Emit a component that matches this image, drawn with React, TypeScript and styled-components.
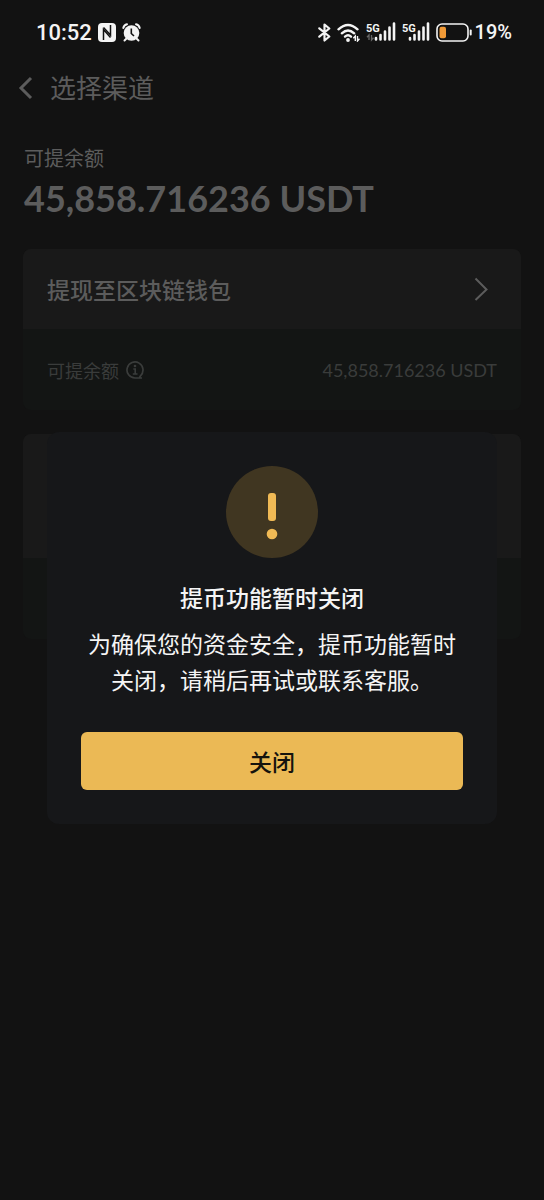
import React from "react";
import styled, { createGlobalStyle } from "styled-components";

const GlobalStyle = createGlobalStyle`
  * { box-sizing: border-box; }
  html, body, #root { min-height: 100vh; }
  body {
    margin: 0;
    background: #121212;
    font-family: Lato, "Noto Sans CJK SC", sans-serif;
  }
  button { font-family: inherit; border: 0; padding: 0; background: none; cursor: pointer; }
  h1, h2, p { margin: 0; }
  svg { display: block; flex: none; }
`;

const Page = styled.div`
  position: relative;
  min-height: 100vh;
  display: flex;
  flex-direction: column;
`;

const StatusBar = styled.div`
  display: flex;
  align-items: center;
  justify-content: space-between;
  height: 64px;
  padding: 0 32px 0 36px;
  color: #f4f4f4;
  font-family: Roboto, sans-serif;
  font-weight: 500;
`;

const StatusGroup = styled.div`
  display: flex;
  align-items: center;
  gap: 6px;
`;

const Clock = styled.span`
  font-size: 22px;
`;

const BatteryLevel = styled.span`
  margin-left: -3px;
  font-size: 20px;
`;

const Header = styled.header`
  display: flex;
  align-items: center;
  gap: 16px;
  height: 48px;
  padding: 0 18px;
  color: #5c5c5c;
`;

const BackButton = styled.button`
  color: inherit;
`;

const PageTitle = styled.h1`
  font-size: 26px;
  line-height: 36px;
  font-weight: 400;
`;

const Balance = styled.section`
  padding: 32px 24px 25px;
  color: #5c5c5c;
`;

const BalanceLabel = styled.p`
  font-size: 20px;
  line-height: 28px;
`;

const BalanceAmount = styled.p`
  font-size: 36px;
  line-height: 52px;
  font-weight: 700;
`;

const CardList = styled.main`
  display: flex;
  flex-direction: column;
  gap: 24px;
  padding: 0 23px;
`;

const Card = styled.section`
  border-radius: 8px;
  overflow: hidden;
  background: #131514;
`;

const CardHead = styled.button<{ $tall?: boolean }>`
  display: flex;
  align-items: center;
  justify-content: space-between;
  width: 100%;
  height: ${(p) => (p.$tall ? 124 : 80)}px;
  padding: 0 32px 0 24px;
  background: #191919;
  color: #5c5c5c;
  font-size: 23px;
  font-weight: 500;
`;

const CardRow = styled.div`
  display: flex;
  align-items: center;
  justify-content: space-between;
  height: 81px;
  padding: 0 24px;
  color: #3a3c3b;
  font-size: 18px;
`;

const InfoLabel = styled.span`
  display: flex;
  align-items: center;
  gap: 7px;
`;

const Overlay = styled.div`
  position: absolute;
  inset: 56px 0 0;
  display: flex;
  align-items: center;
  justify-content: center;
  padding: 0 47px;
`;

const Dialog = styled.div`
  display: flex;
  flex-direction: column;
  align-items: center;
  width: 100%;
  padding: 34px;
  border-radius: 12px;
  background: #161719;
  color: #f5f5f5;
  text-align: center;
`;

const DialogTitle = styled.h2`
  margin-top: 24px;
  font-size: 23px;
  line-height: 32px;
  font-weight: 500;
`;

const DialogText = styled.p`
  margin: 12px 0 34px;
  font-size: 23px;
  line-height: 36px;
`;

const CloseButton = styled.button`
  align-self: stretch;
  height: 58px;
  border-radius: 6px;
  background: #ebb955;
  color: #15130d;
  font-size: 23px;
  font-weight: 500;
`;

const NfcIcon = () => (
  <svg width="18" height="19" viewBox="0 0 18 19" aria-hidden="true">
    <rect width="18" height="19" rx="4" fill="#f4f4f4" />
    <path d="M5.500 17V6.500L12.500 14.500" fill="none" stroke="#121212" strokeWidth="1.500" />
    <path d="M12.500 2V12L5.500 4.500" fill="none" stroke="#121212" strokeWidth="1.500" />
  </svg>
);

const AlarmIcon = () => (
  <svg width="19" height="19" viewBox="0 0 19 19" aria-hidden="true">
    <path d="M1.300 5Q2 2 5 1.300M17.700 5Q17 2 14 1.300M4.500 15.500l-2 2M14.500 15.500l2 2" fill="none" stroke="#f4f4f4" strokeWidth="2" strokeLinecap="round" />
    <circle cx="9.500" cy="10" r="7.800" fill="#f4f4f4" />
    <path d="M9.300 5.500V10.500L12 13" fill="none" stroke="#121212" strokeWidth="1.600" />
  </svg>
);

const BluetoothIcon = () => (
  <svg width="13" height="19" viewBox="0 0 13 19" aria-hidden="true">
    <path d="M1.300 5.300l10 8.200L6.500 17.500v-16L11.300 5.500 1.300 13.700" fill="none" stroke="#f4f4f4" strokeWidth="2.200" strokeLinejoin="round" strokeLinecap="round" />
  </svg>
);

const WifiIcon = () => (
  <svg width="23" height="19" viewBox="0 0 23 19" aria-hidden="true">
    <g fill="none" stroke="#f4f4f4" strokeWidth="2.400" strokeLinecap="round">
      <path d="M1.500 6.300Q11 -2.500 20.500 6.300" />
      <path d="M4.800 10.300Q11 4.500 17.200 10.300" />
      <path d="M8 13.600Q11 11 14 13.600" />
    </g>
    <circle cx="11" cy="17" r="1.900" fill="#f4f4f4" />
    <path d="M18.300 18v-5l-2 2.200M20.500 13v5l2-2.200" fill="none" stroke="#f4f4f4" strokeWidth="1.400" />
  </svg>
);

const SignalIcon = ({ data }: { data?: boolean }) => (
  <svg width={data ? 30 : 28} height="26" viewBox={data ? "0 0 30 26" : "0 0 28 26"} role="img" aria-label="5G">
    <text x="0" y="13" fontFamily="Roboto, sans-serif" fontSize="11" fontWeight="700" fill="#f4f4f4">5G</text>
    {data && <path d="M3 21v-5l-2 2.200M5.500 16v5l2-2.200" fill="none" stroke="#666" strokeWidth="1.300" />}
    <path
      transform={data ? undefined : "translate(-2 0)"}
      d="M10 19v1.500M14.500 16v4.500M19 12.500v8M23.500 8.500v12M28 4.500v16"
      stroke="#f4f4f4"
      strokeWidth="2.600"
      strokeLinecap="round"
    />
  </svg>
);

const BatteryIcon = () => (
  <svg width="36" height="19" viewBox="0 0 36 19" aria-hidden="true">
    <rect x="1" y="1" width="31" height="17" rx="5" fill="none" stroke="#f4f4f4" strokeWidth="1.600" />
    <rect x="3.500" y="3.800" width="6.500" height="11.400" rx="2" fill="#f19a37" />
    <path d="M34.700 7.500v4" stroke="#f4f4f4" strokeWidth="2" strokeLinecap="round" />
  </svg>
);

const BackIcon = () => (
  <svg width="16" height="24" viewBox="0 0 16 24" aria-hidden="true">
    <path d="M13 2L3 12l10 10" fill="none" stroke="currentColor" strokeWidth="3" />
  </svg>
);

const ForwardIcon = () => (
  <svg width="16" height="24" viewBox="0 0 16 24" aria-hidden="true">
    <path d="M2.500 1.500L13.500 12.500l-11 10.500" fill="none" stroke="currentColor" strokeWidth="2" />
  </svg>
);

const InfoIcon = () => (
  <svg width="18" height="18" viewBox="0 0 18 18" aria-hidden="true">
    <path d="M16 17H9a8 8 0 1 1 5.500-2.200L13.500 16.500" fill="none" stroke="currentColor" strokeWidth="1.700" />
    <path d="M7.300 8H9.200V13M6.800 13H11.500" fill="none" stroke="currentColor" strokeWidth="1.600" />
    <circle cx="9" cy="5" r="1.300" fill="currentColor" />
  </svg>
);

const WarningIcon = () => (
  <svg width="92" height="92" viewBox="0 0 92 92" aria-hidden="true">
    <circle cx="46" cy="46" r="46" fill="#403621" />
    <rect x="42" y="27" width="8" height="28" rx="3" fill="#f0ba55" />
    <circle cx="46" cy="68" r="5.300" fill="#f0ba55" />
  </svg>
);

export default function App() {
  return (
    <>
      <GlobalStyle />
      <Page>
        <StatusBar>
          <StatusGroup>
            <Clock>10:52</Clock>
            <NfcIcon />
            <AlarmIcon />
          </StatusGroup>
          <StatusGroup>
            <BluetoothIcon />
            <WifiIcon />
            <SignalIcon data />
            <SignalIcon />
            <BatteryIcon />
            <BatteryLevel>19%</BatteryLevel>
          </StatusGroup>
        </StatusBar>
        <Header>
          <BackButton aria-label="返回">
            <BackIcon />
          </BackButton>
          <PageTitle>选择渠道</PageTitle>
        </Header>
        <Balance>
          <BalanceLabel>可提余额</BalanceLabel>
          <BalanceAmount>45,858.716236 USDT</BalanceAmount>
        </Balance>
        <CardList>
          <Card>
            <CardHead>
              提现至区块链钱包
              <ForwardIcon />
            </CardHead>
            <CardRow>
              <InfoLabel>
                可提余额
                <InfoIcon />
              </InfoLabel>
              <span>45,858.716236 USDT</span>
            </CardRow>
          </Card>
          <Card>
            <CardHead $tall aria-hidden="true" tabIndex={-1} />
            <CardRow />
          </Card>
        </CardList>
        <Overlay>
          <Dialog role="dialog" aria-modal="true" aria-labelledby="dialog-title">
            <WarningIcon />
            <DialogTitle id="dialog-title">提币功能暂时关闭</DialogTitle>
            <DialogText>为确保您的资金安全，提币功能暂时关闭，请稍后再试或联系客服。</DialogText>
            <CloseButton>关闭</CloseButton>
          </Dialog>
        </Overlay>
      </Page>
    </>
  );
}
